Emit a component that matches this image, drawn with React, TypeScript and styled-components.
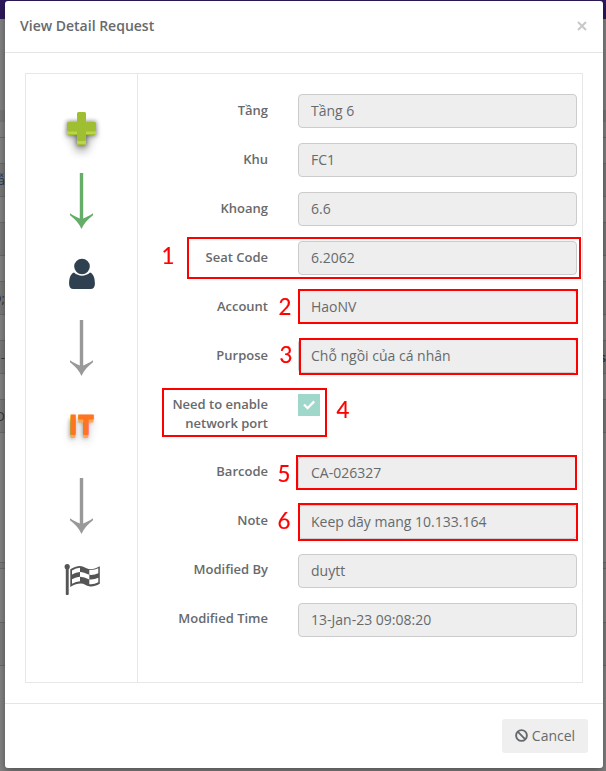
import React from 'react';
import styled, { createGlobalStyle, css } from 'styled-components';

const GlobalStyle = createGlobalStyle`
  * { box-sizing: border-box; }
  body { margin: 0; overflow: hidden; font-family: "Open Sans", sans-serif; color: #676a6c; font-size: 14px; }
`;

const Screen = styled.div`
  position: relative;
  width: 606px;
  height: 771px;
  overflow: hidden;
  background: #7d7d7d;
`;

const Backdrop = styled.div`
  display: flex;
  flex-direction: column;
  height: 771px;
`;

const Band = styled.div<{ $h: number; $bg: string; $line?: boolean }>`
  display: flex;
  justify-content: space-between;
  align-items: center;
  flex: none;
  height: ${p => p.$h}px;
  background: ${p => p.$bg};
  ${p => p.$line && css`border-bottom: 1px solid #6c6c6c;`}
  font-size: 13px;
  color: #343638;
`;

const Clip = styled.span<{ $end?: boolean; $color?: string }>`
  display: flex;
  justify-content: flex-end;
  width: ${p => (p.$end ? 4 : 5)}px;
  overflow: hidden;
  white-space: nowrap;
  color: ${p => p.$color || 'inherit'};
  font-weight: ${p => (p.$end ? 600 : 400)};
`;

const Modal = styled.section`
  position: absolute;
  left: 5px;
  top: 1px;
  width: 598px;
  height: 767px;
  display: flex;
  flex-direction: column;
  background: #fff;
  border-radius: 3px;
  box-shadow: 0 3px 9px rgba(0, 0, 0, 0.4);
`;

const Header = styled.header`
  display: flex;
  justify-content: space-between;
  align-items: center;
  height: 52px;
  padding: 0 15px 2px;
  border-bottom: 1px solid #e5e5e5;
`;

const Title = styled.h4`
  margin: 0;
  font-size: 14px;
  font-weight: 600;
`;

const Close = styled.button`
  display: flex;
  padding: 0;
  margin-right: 1px;
  border: 0;
  background: none;
`;

const Body = styled.div`
  display: grid;
  grid-template-columns: 112px 1fr;
  height: 610px;
  margin: 20px;
  border: 1px solid #e7e7e7;
`;

const Steps = styled.div`
  display: flex;
  flex-direction: column;
  align-items: center;
  padding-top: 20px;
  border-right: 1px solid #e7e7e7;
`;

const Step = styled.div<{ $h: number; $top?: number }>`
  display: flex;
  flex: none;
  justify-content: center;
  align-items: flex-start;
  height: ${p => p.$h}px;
  padding-top: ${p => p.$top || 0}px;
  svg { display: block; overflow: visible; }
`;

const ItMark = styled.span`
  font-size: 27px;
  line-height: 34px;
  font-weight: 700;
  letter-spacing: 0.5px;
  color: #ff7421;
  -webkit-text-stroke: 1px #ff7421;
  text-shadow: 0 1px 0 #ff7421, 0 2px 0 #ffa94d, 0 3px 0 #ffa94d, 0 4px 0 #ffa94d,
    -1px 4px 4px rgba(0, 0, 0, 0.4), 0 8px 10px rgba(0, 0, 0, 0.2);
`;

const Form = styled.div`
  display: flex;
  flex-direction: column;
  gap: 15px;
  padding: 20px 5px 0 24px;
`;

const Field = styled.div<{ $tall?: boolean }>`
  display: grid;
  grid-template-columns: 106px 279px;
  column-gap: 30px;
  height: ${p => (p.$tall ? 53 : 34)}px;
`;

const Label = styled.label<{ $lift?: boolean }>`
  padding-top: ${p => (p.$lift ? 6 : 7)}px;
  text-align: right;
  font-size: 13px;
  line-height: 19px;
  font-weight: 600;
`;

const Value = styled.div`
  height: 34px;
  padding: 0 12px;
  border: 1px solid #ccc;
  border-radius: 4px;
  background: #eee;
  font-size: 14px;
  line-height: 32px;
  white-space: nowrap;
`;

const Check = styled.div`
  display: flex;
  align-items: center;
  justify-content: center;
  width: 22px;
  height: 22px;
  margin-top: 6px;
  background: #9fd8cb;
`;

const Footer = styled.footer`
  display: flex;
  justify-content: flex-end;
  padding: 15px;
  border-top: 1px solid #e5e5e5;
`;

const Cancel = styled.button`
  display: flex;
  align-items: center;
  justify-content: center;
  gap: 4px;
  width: 86px;
  height: 34px;
  padding: 0 0 2px;
  border: 0;
  border-radius: 3px;
  background: #efefef;
  color: #676a6c;
  font: 14px "Open Sans", sans-serif;
`;

/* Red callouts laid over the form */
const Mark = styled.div<{ $x: number; $y: number; $w: number; $h: number }>`
  position: absolute;
  left: ${p => p.$x}px;
  top: ${p => p.$y}px;
  width: ${p => p.$w}px;
  height: ${p => p.$h}px;
  border: 2px solid #f00;
`;

const Digit = styled.span<{ $x: number; $y: number }>`
  position: absolute;
  left: ${p => p.$x - 10}px;
  top: ${p => p.$y - 16}px;
  width: 20px;
  text-align: center;
  font: 24px/30px Lato, sans-serif;
  color: #f00;
  -webkit-text-stroke: 0.2px #f00;
  transform: scaleX(0.93);
`;

const Arrow = ({ color }: { color: string }) => (
  <svg width="23" height="56" viewBox="0.5 0 23 56" fill={color}>
    <path d="M10.300 0h3.400v45.500c3-1.100 6.300-3 9.800-5.300v2C18 46.500 14.200 50.500 12 56 9.800 50.500 6 46.500.5 42.200v-2c3.500 2.300 6.800 4.200 9.800 5.300z" />
  </svg>
);

const Plus = () => (
  <svg width="31" height="40" viewBox="0.5 0 31 40">
    <defs>
      <filter id="soft" x="-100%" y="-100%" width="300%" height="300%">
        <feGaussianBlur stdDeviation="5" />
      </filter>
      <filter id="near" x="-50%" y="-50%" width="200%" height="200%">
        <feGaussianBlur stdDeviation="2" />
      </filter>
    </defs>
    <path d="M4 16h24v12h-6v12H10V28H4z" opacity=".35" filter="url(#soft)" />
    <path d="M1 10h30v15H21v10H11V25H1z" opacity=".4" filter="url(#near)" />
    <path d="M13 4h6q1.500 0 1.500 1.500V14H29q1.500 0 1.500 1.500v7q0 1.500-1.500 1.500h-8.500v8.500q0 1.500-1.500 1.500h-6q-1.500 0-1.500-1.500V24H3q-1.500 0-1.500-1.500v-7Q1.500 14 3 14h8.500V5.500Q11.500 4 13 4z" fill="#b9d54c" />
    <path d="M13 1h6q1.500 0 1.500 1.500V11H29q1.500 0 1.500 1.500v6.500q0 1.500-1.500 1.500h-8.500v8q0 1.500-1.500 1.500h-6q-1.500 0-1.500-1.500v-8H3q-1.500 0-1.500-1.500v-6.500Q1.500 11 3 11h8.500V2.500Q11.500 1 13 1z" fill="#a0be31" />
    <path d="M2.500 23.600h9M20.500 23.600h9M12.500 33.600h7" stroke="#a0be31" />
  </svg>
);

const Person = () => (
  <svg width="25" height="32" viewBox="0 0 25 32" fill="#2f4050">
    <circle cx="13" cy="8.500" r="7.800" />
    <path d="M5 14.500C1.500 15.800.1 20 .1 26c0 3 1.700 5 4.200 5h17.400c2.500 0 4.200-2 4.200-5 0-6-1.400-10.200-4.900-11.500-4.500 4.200-11.500 4.200-16 0z" />
  </svg>
);

const Flag = () => (
  <svg width="35" height="32" viewBox="-0.5 0 35 32">
    <circle cx="2.700" cy="2.700" r="2.600" fill="#555" />
    <path d="M1.300 3h2.900v27.500q-1.450 1-2.900 0z" fill="#555" />
    <path d="M5.800 5.300C14.500.2 17.800 2 22 4.300c4 2 8 .8 13.300-2v17.500c-6 3.200-10 3.300-14.100 1.100-4.200-2.200-8.500-1.700-15.400 2z" fill="#555" />
    <g fill="#fff">
      <path d="M7.500 6.500Q11.500 4 15.500 3.800v4.100Q11.500 8.200 7.500 10.500z" />
      <path d="M15.500 7.900q3.500-.1 9.300 2.900v4.700q-5-2.500-9.300-2.800z" />
      <path d="M24.800 5.900q4.700.5 9-1.600v4.900q-4.500 2.200-9 1.600z" />
      <path d="M7.500 15.200q4-2.300 8-2.500v4.500q-4 .3-8 2.500z" />
      <path d="M24.800 15.500q4.700.5 9-1.700v4.500q-4.500 2.500-9 1.900z" />
    </g>
  </svg>
);

const fields: [string, string][] = [
  ['Tầng', 'Tầng 6'],
  ['Khu', 'FC1'],
  ['Khoang', '6.6'],
  ['Seat Code', '6.2062'],
  ['Account', 'HaoNV'],
  ['Purpose', 'Chỗ ngồi của cá nhân'],
];
const details: [string, string][] = [
  ['Barcode', 'CA-026327'],
  ['Note', 'Keep dãy mang 10.133.164'],
  ['Modified By', 'duytt'],
  ['Modified Time', '13-Jan-23 09:08:20'],
];

const bands: { h: number; bg: string; line?: boolean; left?: string; right?: string; color?: string }[] = [
  { h: 19, bg: '#2f195c' },
  { h: 91, bg: '#848484' },
  { h: 12, bg: '#797979' },
  { h: 16, bg: '#848484', line: true },
  { h: 26, bg: '#848484', line: true },
  { h: 33, bg: '#7b7b7b', line: true, left: 'ẫ', color: '#243a5c' },
  { h: 26, bg: '#848484', line: true },
  { h: 33, bg: '#7b7b7b', line: true },
  { h: 26, bg: '#848484', line: true },
  { h: 33, bg: '#7b7b7b', line: true, left: 'O;' },
  { h: 26, bg: '#848484', line: true },
  { h: 33, bg: '#7b7b7b', line: true, left: '-', right: 's' },
  { h: 26, bg: '#848484', line: true },
  { h: 33, bg: '#7b7b7b', line: true, left: 'D' },
  { h: 130, bg: '#848484', line: true },
  { h: 6, bg: '#7e7e7e', line: true },
  { h: 54, bg: '#848484', line: true },
  { h: 43, bg: '#7e7e7e', line: true },
  { h: 106, bg: '#848484' },
];

const marks = [
  { x: 187, y: 237, w: 394, h: 42, dx: 168, dy: 256 },
  { x: 298, y: 289, w: 280, h: 35, dx: 284.5, dy: 307 },
  { x: 299, y: 338, w: 279, h: 37, dx: 286, dy: 355 },
  { x: 162, y: 388, w: 165, h: 49, dx: 343, dy: 410 },
  { x: 296, y: 455, w: 281, h: 35, dx: 283.5, dy: 474 },
  { x: 298, y: 503, w: 280, h: 38, dx: 283.5, dy: 521 },
];

export default function App() {
  return (
    <Screen>
      <GlobalStyle />
      <Backdrop>
        {bands.map((b, i) => (
          <Band key={i} $h={b.h} $bg={b.bg} $line={b.line}>
            <Clip $color={b.color}>{b.left}</Clip>
            <Clip $end>{b.right}</Clip>
          </Band>
        ))}
      </Backdrop>
      <Modal>
        <Header>
          <Title>View Detail Request</Title>
          <Close aria-label="Close">
            <svg width="10" height="10" viewBox="0 0 10 10" stroke="#c8c8c8" strokeWidth="2">
              <path d="M1 1l8 8M9 1L1 9" />
            </svg>
          </Close>
        </Header>
        <Body>
          <Steps>
            <Step $h={79} $top={17}><Plus /></Step>
            <Step $h={56}><Arrow color="#66ad69" /></Step>
            <Step $h={91} $top={29}><Person /></Step>
            <Step $h={56}><Arrow color="#999" /></Step>
            <Step $h={102} $top={31}><ItMark>IT</ItMark></Step>
            <Step $h={56}><Arrow color="#999" /></Step>
            <Step $h={62} $top={30}><Flag /></Step>
          </Steps>
          <Form>
            {fields.map(([label, value]) => (
              <Field key={label}>
                <Label>{label}</Label>
                <Value>{value}</Value>
              </Field>
            ))}
            <Field $tall>
              <Label>Need to enable network port</Label>
              <Check>
                <svg width="14" height="12" viewBox="0 0 14 12" fill="none" stroke="#fff" strokeWidth="2.300">
                  <path d="M2 5.500l3.600 3.700L12.200 2.400" />
                </svg>
              </Check>
            </Field>
            {details.map(([label, value]) => (
              <Field key={label}>
                <Label $lift>{label}</Label>
                <Value>{value}</Value>
              </Field>
            ))}
          </Form>
        </Body>
        <Footer>
          <Cancel>
            <svg width="13" height="13" viewBox="0 0 13 13" fill="none" stroke="#676a6c" strokeWidth="1.900">
              <circle cx="6.500" cy="6.500" r="5.400" />
              <path d="M2.700 2.700l7.600 7.600" />
            </svg>
            Cancel
          </Cancel>
        </Footer>
      </Modal>
      {marks.map((m, i) => (
        <React.Fragment key={i}>
          <Mark $x={m.x} $y={m.y} $w={m.w} $h={m.h} />
          <Digit $x={m.dx} $y={m.dy}>{i + 1}</Digit>
        </React.Fragment>
      ))}
    </Screen>
  );
}
